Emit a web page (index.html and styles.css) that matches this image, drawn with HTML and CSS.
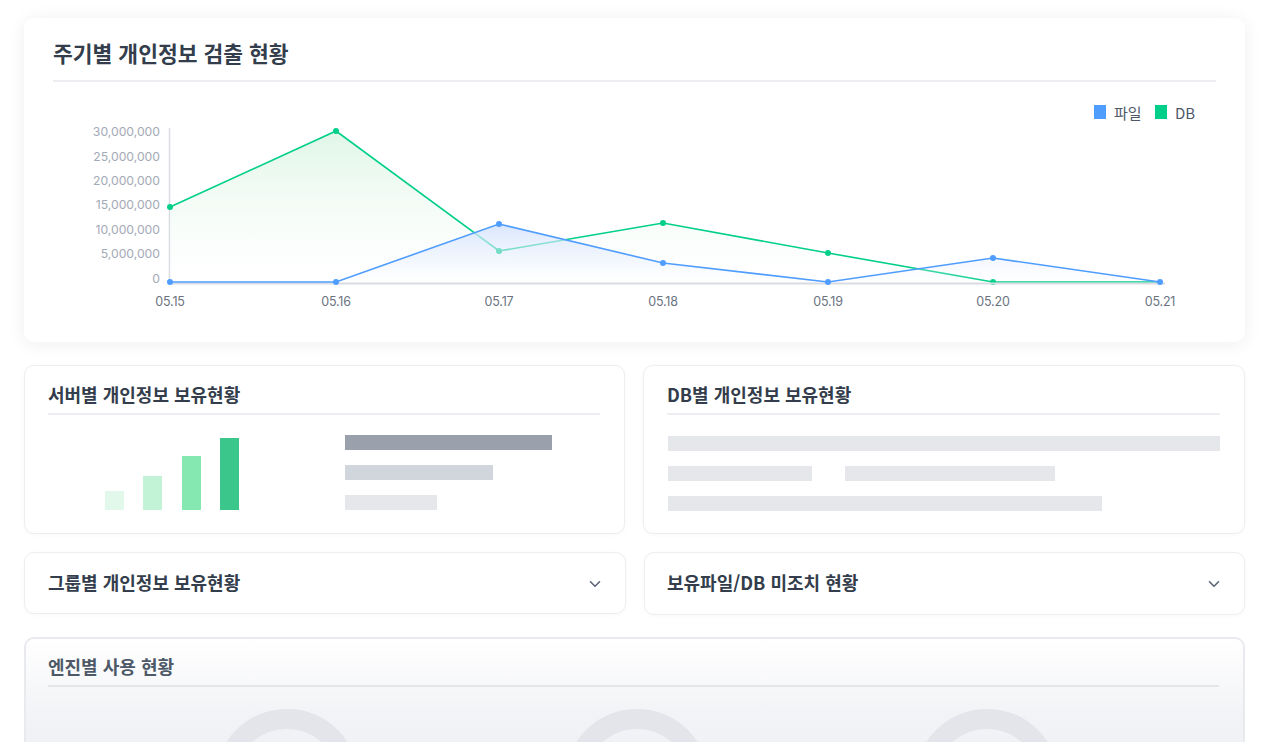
FILE: index.html
```html
<!DOCTYPE html>
<html lang="ko">
<head>
<meta charset="utf-8">
<title>Dashboard</title>
<link rel="stylesheet" href="styles.css">
</head>
<body>
<main class="page">
  <section class="card card-main">
    <h2 class="card-title main-title">주기별 개인정보 검출 현황</h2>
    <svg class="trend-chart" width="1221" height="260" viewBox="24 82 1221 260" xmlns="http://www.w3.org/2000/svg">
      <defs>
        <linearGradient id="gGreen" x1="0" y1="131" x2="0" y2="283" gradientUnits="userSpaceOnUse">
          <stop offset="0" stop-color="#dcf5e4" stop-opacity="0.9"/>
          <stop offset="1" stop-color="#ffffff" stop-opacity="0.3"/>
        </linearGradient>
        <linearGradient id="gBlue" x1="0" y1="224" x2="0" y2="283" gradientUnits="userSpaceOnUse">
          <stop offset="0" stop-color="#d3e2fd" stop-opacity="0.85"/>
          <stop offset="0.7" stop-color="#e6eefe" stop-opacity="0.35"/>
          <stop offset="1" stop-color="#f7f9ff" stop-opacity="0"/>
        </linearGradient>
      </defs>
      <g class="legend">
        <rect x="1094" y="105" width="12" height="14" fill="#4f9dff"/>
        <text x="1114" y="112" class="legend-text">파일</text>
        <rect x="1155" y="105" width="12" height="14" fill="#00cf8a"/>
        <text x="1175" y="112" class="legend-text">DB</text>
      </g>
      <g class="y-labels">
        <text x="160" y="131">30,000,000</text>
        <text x="160" y="156">25,000,000</text>
        <text x="160" y="180">20,000,000</text>
        <text x="160" y="204">15,000,000</text>
        <text x="160" y="229">10,000,000</text>
        <text x="160" y="253">5,000,000</text>
        <text x="160" y="278">0</text>
      </g>
      <g class="x-labels">
        <text x="170" y="301">05.15</text>
        <text x="336" y="301">05.16</text>
        <text x="499" y="301">05.17</text>
        <text x="663" y="301">05.18</text>
        <text x="828" y="301">05.19</text>
        <text x="993" y="301">05.20</text>
        <text x="1160" y="301">05.21</text>
      </g>
      <line x1="169.5" y1="128" x2="169.5" y2="283" stroke="#d9dce3" stroke-width="1.5"/>
      <polygon points="170,283 170,207 336,131 499,251 663,223 828,253 993,282 1160,282 1160,283" fill="url(#gGreen)"/>
      <polyline points="170,207 336,131 499,251 663,223 828,253 993,282 1160,282" fill="none" stroke="#00cf8a" stroke-width="1.6"/>
      <g fill="#00cf8a">
        <circle cx="170" cy="207" r="3"/><circle cx="336" cy="131" r="3"/><circle cx="499" cy="251" r="3"/>
        <circle cx="663" cy="223" r="3"/><circle cx="828" cy="253" r="3"/><circle cx="993" cy="282" r="3"/>
      </g>
      <polygon points="170,283 170,282 336,282 499,224 663,263 828,282 993,258 1160,282 1160,283" fill="url(#gBlue)"/>
      <line x1="169" y1="283.5" x2="1165" y2="283.5" stroke="#d9dce3" stroke-width="2"/>
      <polyline points="170,282 336,282 499,224 663,263 828,282 993,258 1160,282" fill="none" stroke="#4f9dff" stroke-width="1.6"/>
      <g fill="#4f9dff">
        <circle cx="170" cy="282" r="3"/><circle cx="336" cy="282" r="3"/><circle cx="499" cy="224" r="3"/>
        <circle cx="663" cy="263" r="3"/><circle cx="828" cy="282" r="3"/><circle cx="993" cy="258" r="3"/>
        <circle cx="1160" cy="282" r="3"/>
      </g>
    </svg>
  </section>

  <div class="row">
    <section class="card card-small">
      <h3 class="card-title sub-title">서버별 개인정보 보유현황</h3>
      <div class="server-body">
        <div class="vbars">
          <span class="vbar vbar-1"></span>
          <span class="vbar vbar-2"></span>
          <span class="vbar vbar-3"></span>
          <span class="vbar vbar-4"></span>
        </div>
        <div class="hbars">
          <span class="hbar hbar-1"></span>
          <span class="hbar hbar-2"></span>
          <span class="hbar hbar-3"></span>
        </div>
      </div>
    </section>
    <section class="card card-small">
      <h3 class="card-title sub-title">DB별 개인정보 보유현황</h3>
      <div class="db-body">
        <span class="skel skel-full"></span>
        <div class="skel-row">
          <span class="skel skel-a"></span>
          <span class="skel skel-b"></span>
        </div>
        <span class="skel skel-c"></span>
      </div>
    </section>
  </div>

  <div class="row row-acc">
    <section class="card card-acc">
      <h3 class="acc-title">그룹별 개인정보 보유현황</h3>
      <svg class="chevron" width="12" height="8" viewBox="0 0 12 8"><path d="M1.5 1.8 6 6.2 10.5 1.8" fill="none" stroke="#5b6474" stroke-width="1.6" stroke-linecap="round" stroke-linejoin="round"/></svg>
    </section>
    <section class="card card-acc">
      <h3 class="acc-title">보유파일/DB 미조치 현황</h3>
      <svg class="chevron" width="12" height="8" viewBox="0 0 12 8"><path d="M1.5 1.8 6 6.2 10.5 1.8" fill="none" stroke="#5b6474" stroke-width="1.6" stroke-linecap="round" stroke-linejoin="round"/></svg>
    </section>
  </div>

  <section class="card card-engine">
    <h3 class="card-title sub-title engine-title">엔진별 사용 현황</h3>
    <div class="rings">
      <div class="ring"></div>
      <div class="ring"></div>
      <div class="ring"></div>
    </div>
  </section>
</main>
</body>
</html>
```
FILE: styles.css
```css
html, body {
  margin: 0;
  padding: 0;
  background: #ffffff;
  overflow: hidden;
}
body {
  font-family: "Inter", "Noto Sans CJK KR", "Noto Sans", sans-serif;
  color: #333d4b;
  height: 742px;
}
.page {
  width: 1221px;
  margin-left: 24px;
  padding-top: 18px;
  display: flex;
  flex-direction: column;
}
.card {
  background: #ffffff;
  border-radius: 10px;
  box-sizing: border-box;
}
.card-main {
  height: 324px;
  padding: 0 29px;
  box-shadow: 0 2px 18px rgba(20, 30, 50, 0.07);
  overflow: hidden;
}
.card-title {
  margin: 0;
  font-family: "Noto Sans CJK KR", "Noto Sans", sans-serif;
  font-weight: 700;
  color: #333d4b;
  border-bottom: 2px solid #eceef1;
}
.main-title {
  font-size: 21.5px;
  line-height: 28px;
  padding: 21px 0 13px;
}
.trend-chart {
  display: block;
  margin: 0 -29px;
}
.legend-text {
  font-family: "Noto Sans CJK KR", "Inter", sans-serif;
  font-size: 15px;
  fill: #4e5968;
  dominant-baseline: central;
}
.y-labels text {
  font-family: "Inter", sans-serif;
  font-size: 12.2px;
  fill: #a3a9b6;
  text-anchor: end;
  dominant-baseline: central;
}
.x-labels text {
  font-family: "Inter", sans-serif;
  font-size: 12.5px;
  fill: #6b7380;
  text-anchor: middle;
  dominant-baseline: central;
  letter-spacing: -0.2px;
}

.row {
  display: flex;
  gap: 18px;
  margin-top: 23px;
}
.row-acc {
  margin-top: 18px;
}
.card-small,
.card-acc {
  flex: 1 1 0;
  border: 1px solid #eceef1;
  box-shadow: 0 1px 4px rgba(20, 30, 50, 0.03);
}
.card-small {
  height: 169px;
  padding: 16px 24px 0 23px;
}
.sub-title {
  font-size: 18px;
  line-height: 24px;
  padding-bottom: 7px;
}

.server-body {
  display: flex;
  align-items: flex-end;
  height: 95px;
  padding-left: 57px;
}
.vbars {
  display: flex;
  align-items: flex-end;
  gap: 19.3px;
}
.vbar {
  display: block;
  width: 19px;
}
.vbar-1 { height: 19px; background: #e1f8ea; }
.vbar-2 { height: 34px; background: #c3f3d6; }
.vbar-3 { height: 54px; background: #86e8b1; }
.vbar-4 { height: 72px; background: #3bc68c; }
.hbars {
  display: flex;
  flex-direction: column;
  gap: 15px;
  margin-left: 106px;
}
.hbar {
  display: block;
  height: 15px;
}
.hbar-1 { width: 207px; background: #9aa1ad; }
.hbar-2 { width: 148px; background: #d1d5dc; }
.hbar-3 { width: 92px; background: #e5e7eb; }

.db-body {
  display: flex;
  flex-direction: column;
  gap: 15px;
  padding-top: 21px;
  padding-left: 1px;
}
.skel {
  display: block;
  height: 15px;
  background: #e5e7eb;
}
.skel-full { width: 552px; }
.skel-row {
  display: flex;
  gap: 33px;
}
.skel-a { width: 144px; }
.skel-b { width: 210px; }
.skel-c { width: 434px; }

.card-acc {
  height: 62px;
  padding: 0 24px 0 23px;
  display: flex;
  align-items: center;
  justify-content: space-between;
}
.card-acc + .card-acc {
  height: 63px;
  padding-left: 22px;
}
.acc-title {
  margin: -3px 0 0;
  font-family: "Noto Sans CJK KR", "Noto Sans", sans-serif;
  font-size: 18px;
  line-height: 24px;
  font-weight: 700;
  color: #333d4b;
}
.chevron {
  display: block;
  margin-top: 1px;
}

.card-engine {
  margin-top: 22px;
  height: 130px;
  border: 2px solid #e8eaee;
  border-bottom: none;
  border-radius: 10px 10px 0 0;
  padding: 15px 24px 0 22px;
  background: linear-gradient(180deg, #ffffff 0%, #f2f3f6 60%, #eff0f3 100%);
  overflow: hidden;
}
.engine-title {
  color: #4e5968;
  border-bottom-color: #e4e6ea;
}
.rings {
  display: grid;
  grid-template-columns: repeat(3, 350px);
  padding-left: 64px;
  padding-top: 22px;
}
.ring {
  justify-self: center;
  width: 144px;
  height: 144px;
  border-radius: 50%;
  border: 20px solid #e3e5ea;
  box-sizing: border-box;
}
```
